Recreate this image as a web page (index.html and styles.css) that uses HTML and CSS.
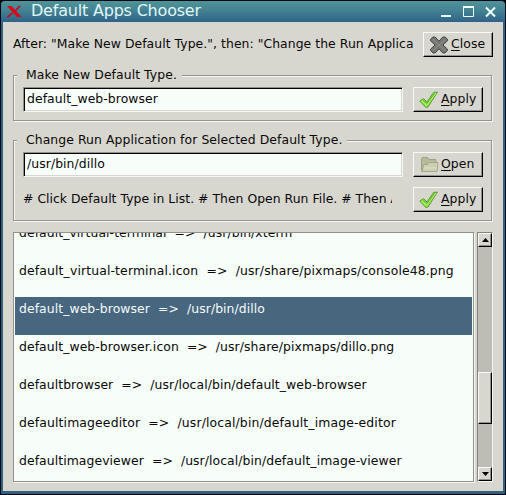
FILE: index.html
```html
<!DOCTYPE html>
<html lang="en">
<head>
<meta charset="utf-8">
<title>Default Apps Chooser</title>
<link rel="stylesheet" href="styles.css">
</head>
<body>
<svg class="defs" width="0" height="0">
  <symbol id="check" viewBox="0 0 20 18">
    <path d="M.8 10 L4.5 7.6 L8 11 L14.5 1.5 L18.5 1 L9 16 L6.8 16.5 Z" fill="#8be23c" stroke="#5c9b3c" stroke-width="1"/>
    <path d="M2.5 10 L7.5 14.3 L17 2" fill="none" stroke="#bdf777" stroke-width="1"/>
    <path d="M4.4 9.3 L7.9 12.6 L15.5 2.5" fill="none" stroke="#65a832" stroke-width=".9"/>
  </symbol>
</svg>
<div class="window">
  <header class="titlebar">
    <svg class="logo" width="16" height="13" viewBox="0 0 16 13"><path d="M1 1h4.5l10 11H11z" fill="#dc0815"/><path d="M14 .8L9.5 5.5M6.5 7.8L1.5 12.3" stroke="#c01020" stroke-width="1.8"/></svg>
    <h1 class="title">Default Apps Chooser</h1>
    <svg class="controls" width="56" height="14" viewBox="0 0 56 14" fill="none" stroke="#edffff" stroke-width="2"><path d="M0 11h10"/><path d="M22.5 2.5h10v9h-10z" stroke-width="1"/><path d="M22 2h11" stroke-width="2"/><path d="M45 2.5l9 9M54 2.5l-9 9"/></svg>
  </header>
  <main class="content">
    <div class="toprow">
      <div class="hint intro">After: "Make New Default Type.", then: "Change the Run Applica</div>
      <button class="button"><svg class="icon" width="20" height="18" viewBox="0 0 20 18"><path d="M1.5 3.2L4 1h2.2L10 5.2 13.8 1H16l2.5 2.2v1.6L14 9l4.5 4.2v1.3L16 17h-2.2L10 12.8 6.2 17H4l-2.5-2.5v-1.3L6 9 1.5 4.8z" fill="#777875" stroke="#464744"/><path d="M4 3.5l12 11M16 3.5L4 14.5" stroke="#8d8e8a" stroke-width="1"/></svg><span class="label"><u>C</u>lose</span></button>
    </div>
    <section class="group make">
      <h2 class="legend">Make New Default Type.</h2>
      <div class="line"><div class="input">default_web-browser</div><button class="button"><svg class="icon" width="20" height="18"><use href="#check"/></svg><span class="label"><u>A</u>pply</span></button></div>
    </section>
    <section class="group change">
      <h2 class="legend">Change Run Application for Selected Default Type.</h2>
      <div class="line"><div class="input">/usr/bin/dillo</div><button class="button"><svg class="icon" width="20" height="18" viewBox="0 0 20 18"><path d="M2.5 15.5v-13l1-1h5l1.5 2h7v6" fill="#b9ba98" stroke="#a0a184"/><path d="M4.5 8.5h4l1.5-2h9l-1 9h-15z" fill="#cecfb2" stroke="#a5a68a"/><path d="M5 12h13" stroke="#dedfc8"/></svg><span class="label"><u>O</u>pen</span></button></div>
      <div class="line"><div class="hint steps"># Click Default Type in List. # Then Open Run File. # Then Apply.</div><button class="button"><svg class="icon" width="20" height="18"><use href="#check"/></svg><span class="label"><u>A</u>pply</span></button></div>
    </section>
    <div class="browser">
      <ul class="list">
        <li class="row first">default_virtual-terminal  =&gt;  /usr/bin/xterm</li>
        <li class="row wide">default_virtual-terminal.icon  =&gt;  /usr/share/pixmaps/console48.png</li>
        <li class="row selected">default_web-browser  =&gt;  /usr/bin/dillo</li>
        <li class="row">default_web-browser.icon  =&gt;  /usr/share/pixmaps/dillo.png</li>
        <li class="row">defaultbrowser  =&gt;  /usr/local/bin/default_web-browser</li>
        <li class="row wide">defaultimageeditor  =&gt;  /usr/local/bin/default_image-editor</li>
        <li class="row">defaultimageviewer  =&gt;  /usr/local/bin/default_image-viewer</li>
      </ul>
      <div class="scrollbar">
        <div class="knob arrow"><svg width="7" height="4"><path d="M0 4L3.5 0 7 4z"/></svg></div>
        <div class="above"></div>
        <div class="knob thumb"></div>
        <div class="below"></div>
        <div class="knob arrow"><svg width="7" height="4"><path d="M0 0l3.5 4L7 0z"/></svg></div>
      </div>
    </div>
  </main>
</div>
</body>
</html>
```
FILE: styles.css
```css
* { box-sizing: border-box; }
body { margin: 0; background: #000; overflow: hidden; font: 12.4px/16px "DejaVu Sans", sans-serif; letter-spacing: .08px; color: #080808; }
.defs { display: block; }
.window { width: 506px; height: 495px; border: 1px solid #000818; border-radius: 5px 5px 2px 2px; background: #32617e; overflow: hidden; }
.titlebar { height: 21px; display: flex; align-items: center; padding: 0 8px 0 5px; background: linear-gradient(#4f9498, #448292 45%, #2e6288); }
.logo { margin-top: -1px; }
.title { flex: 1; margin: -2px 0 0 9px; font-size: 16px; line-height: 20px; letter-spacing: -.2px; font-weight: 400; color: #e0f6f8; white-space: nowrap; }
.content { height: 469px; margin: 0 2px; padding: 10px 10px 0; background: #d8d7cf; }
.toprow { display: flex; justify-content: space-between; height: 25px; }
.hint { height: 25px; line-height: 24px; overflow: hidden; white-space: nowrap; }
.intro { width: 403px; letter-spacing: .06px; }
.steps { width: 369px; letter-spacing: .03px; }
.button { display: flex; align-items: center; flex: none; width: 70px; height: 25px; margin: 0; padding: 0 0 0 5px; border: 1px solid; border-color: #fafaf4 #000 #000 #fafaf4; box-shadow: inset -1px -1px #92918a; background: #d8d7cf; font: inherit; letter-spacing: .08px; color: inherit; }
.icon { flex: none; }
.label { margin: 0 0 1px 2px; }
u { text-underline-offset: 2px; }
.group { position: relative; width: 479px; border: 1px solid #94948c; box-shadow: 1px 1px #f7f7f1, inset 1px 1px #f7f7f1; padding: 11px 8px 0 9px; }
.make { height: 46px; margin-top: 18px; }
.change { height: 81px; margin-top: 19px; }
.legend { position: absolute; left: 3px; top: -9px; margin: 0; padding: 0 5px 0 9px; background: #d8d7cf; font-size: 12.4px; font-weight: 400; white-space: nowrap; }
.line { display: flex; justify-content: space-between; height: 25px; margin-bottom: 10px; }
.input { width: 380px; height: 25px; padding: 0 3px; border: solid; border-width: 1px; border-color: #92918a #f7f7f1 #f7f7f1 #92918a; box-shadow: inset 1px 1px #000, inset -1px -1px #d8d7cf; background: #f7fdf9; line-height: 22px; }
.browser { display: flex; justify-content: space-between; margin-top: 11px; height: 250px; }
.list { width: 461px; margin: 0; padding: 0 1px; list-style: none; border: solid; border-width: 1px; border-color: #92918a; box-shadow: 1px 1px #f7f7f1; background: #f7fdf9; overflow: hidden; }
.row { height: 38px; padding: 4px 4px; white-space: pre; }
.wide { letter-spacing: .14px; }
.first { margin-top: -12px; }
.selected { background: #48677f; color: #f4fbfa; }
.scrollbar { display: flex; flex-direction: column; width: 16px; height: 250px; border: 1px solid; border-color: #85847e #f7f7f1 #f7f7f1 #85847e; background: #bdbcb5; }
.knob { flex: none; border: 1px solid; border-color: #fafaf4 #000 #000 #fafaf4; box-shadow: inset -1px -1px #92918a; background: #d8d7cf; }
.arrow { display: flex; height: 14px; align-items: center; justify-content: center; }
.above { height: 125px; }
.thumb { height: 52px; }
.below { flex: 1; }
```
